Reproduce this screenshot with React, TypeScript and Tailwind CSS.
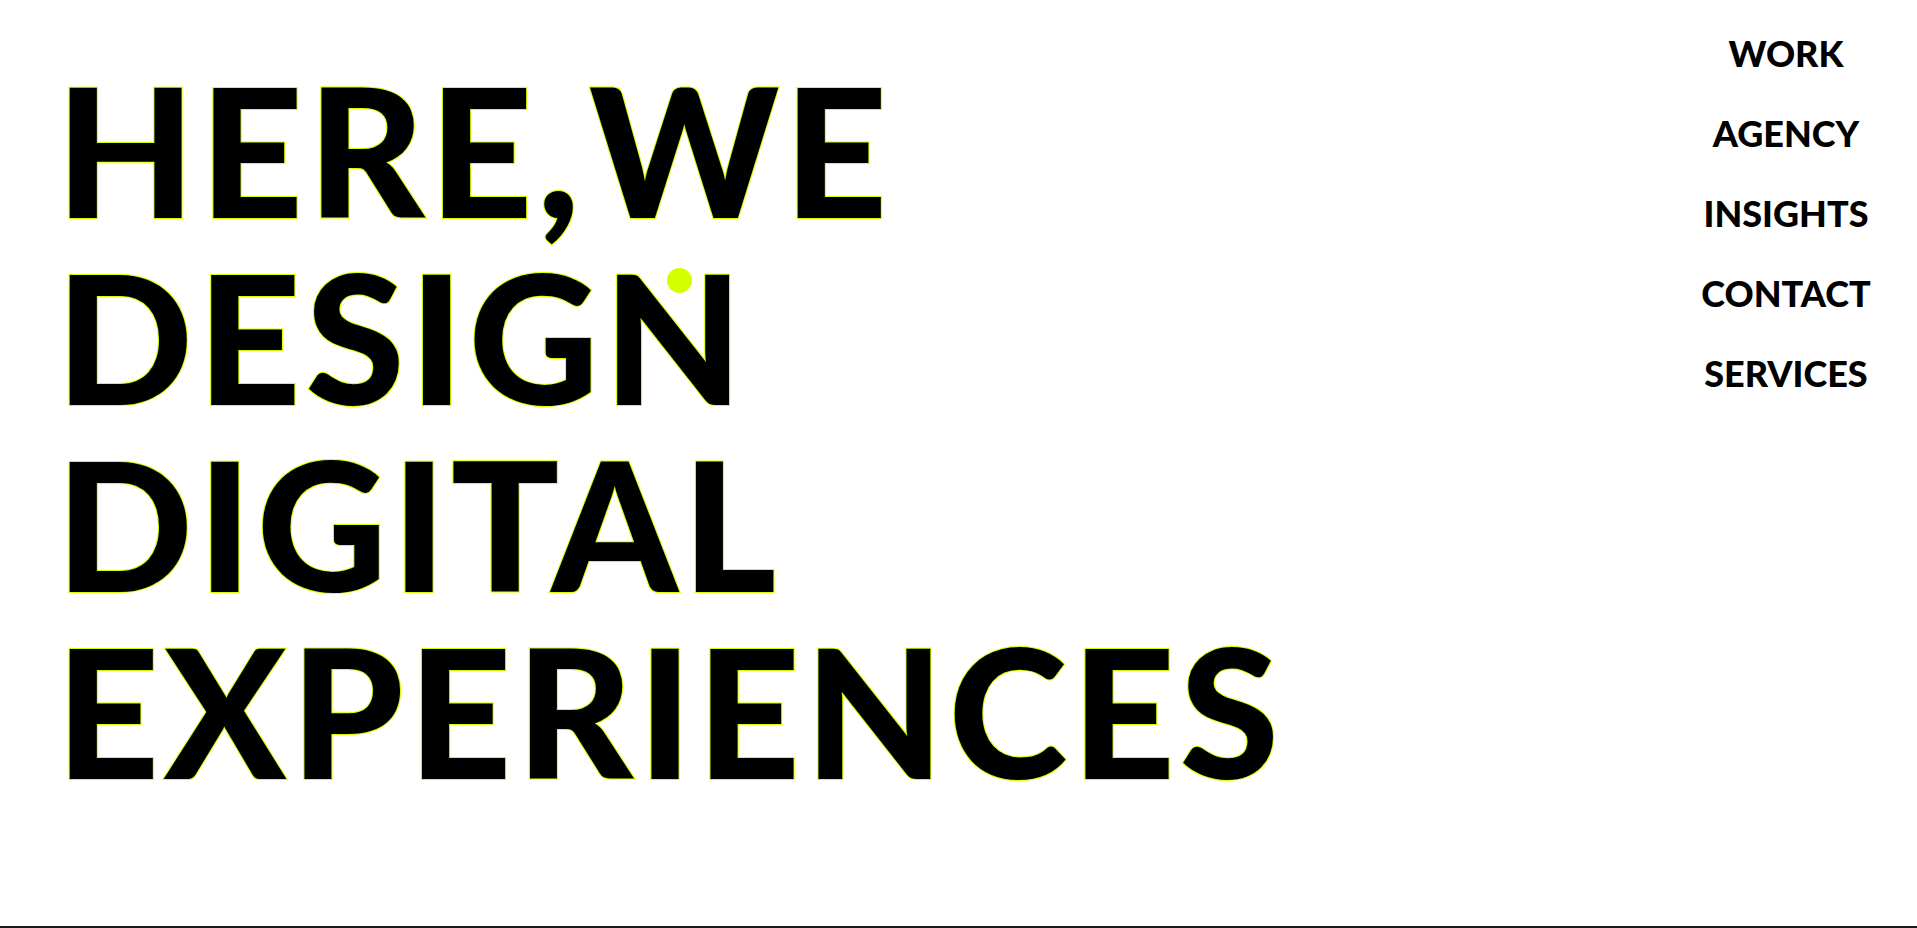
import React from "react";

const lines = ["HERE, WE", "DESIGN", "DIGITAL", "EXPERIENCES"];
const nav = ["WORK", "AGENCY", "INSIGHTS", "CONTACT", "SERVICES"];

export default function App() {
  return (
    <div className="relative h-[928px] w-full overflow-hidden bg-white border-b-2 border-[#1a1a1a] font-['Lato',sans-serif]">
      <div className="flex justify-between">
        <h1 className="pl-[56px] pt-[55px] text-[180px] font-black leading-[187px] tracking-[4.6px] [word-spacing:-42px] text-black [-webkit-text-stroke:2px_#d4ff00] [paint-order:stroke_fill]">
          {lines.map((l) => (
            <div key={l}>{l}</div>
          ))}
        </h1>
        <nav className="flex w-[240px] flex-col items-center gap-[44px] pt-[35px] pr-[22px]">
          {nav.map((n) => (
            <a key={n} className="text-[36px] font-black leading-[36px] text-black">
              {n}
            </a>
          ))}
        </nav>
      </div>
      <div className="absolute left-[667px] top-[268px] h-[25px] w-[25px] rounded-full bg-[#d4ff00]" />
    </div>
  );
}
